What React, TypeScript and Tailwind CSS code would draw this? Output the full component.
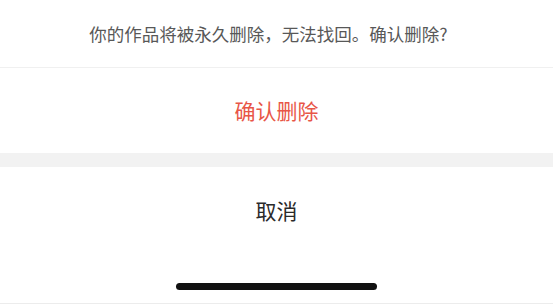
export default function App() {
  return (
    <div
      className="w-[553px] h-[304px] bg-white flex flex-col overflow-hidden"
      style={{ fontFamily: '"Noto Sans CJK SC", "Noto Sans", sans-serif' }}
    >
      {/* message */}
      <div className="h-[68px] flex items-center justify-center pr-[16px] border-b border-[#f0f0f0]">
        <p className="text-[17.5px] leading-none text-[#585858]">你的作品将被永久删除，无法找回。确认删除?</p>
      </div>

      {/* confirm */}
      <button className="h-[85px] flex items-center justify-center text-[21px] leading-none text-[#e85647]">
        确认删除
      </button>

      {/* gap */}
      <div className="h-[14px] bg-[#f2f2f2]" />

      {/* cancel */}
      <button className="h-[86px] flex items-center justify-center text-[21px] leading-none text-[#2a2a2a]">
        取消
      </button>

      {/* home indicator */}
      <div className="flex-1 flex flex-col items-center border-b border-[#ececec]">
        <div className="mt-[30px] w-[201px] h-[7px] rounded-full bg-[#111111]" />
      </div>
    </div>
  );
}
